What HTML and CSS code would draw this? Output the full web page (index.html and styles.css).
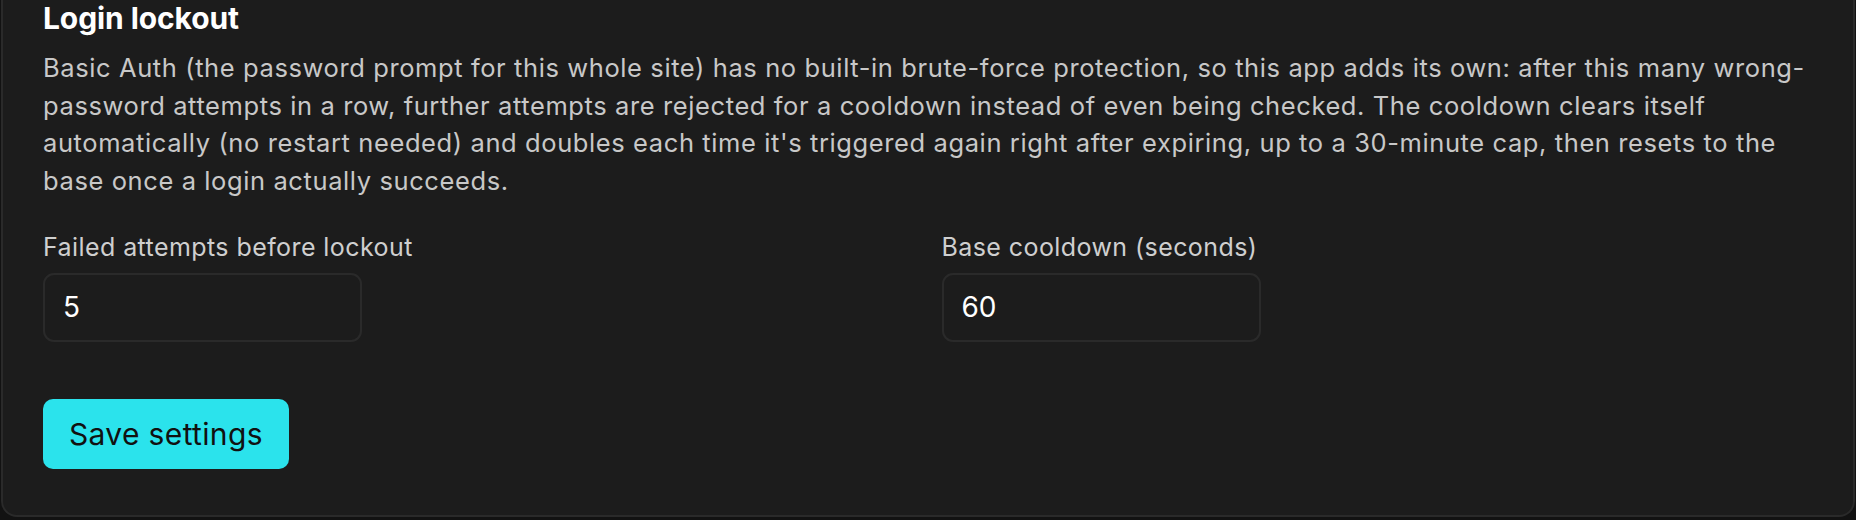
FILE: index.html
```html
<!DOCTYPE html>
<html lang="en">
<head>
<meta charset="utf-8">
<title>Login lockout</title>
<link rel="stylesheet" href="styles.css">
</head>
<body>
<div class="page">
  <section class="panel">
    <h2 class="panel-title">Login lockout</h2>
    <p class="panel-desc">Basic Auth (the password prompt for this whole site) has no built-in brute-force protection, so this app adds its own: after this many wrong-password attempts in a row, further attempts are rejected for a cooldown instead of even being checked. The cooldown clears itself automatically (no restart needed) and doubles each time it's triggered again right after expiring, up to a 30-minute cap, then resets to the base once a login actually succeeds.</p>
    <div class="fields">
      <label class="field">
        <span class="field-label">Failed attempts before lockout</span>
        <input class="field-input" type="text" value="5">
      </label>
      <label class="field">
        <span class="field-label">Base cooldown (seconds)</span>
        <input class="field-input" type="text" value="60">
      </label>
    </div>
    <div class="actions">
      <button class="btn-primary" type="button">Save settings</button>
    </div>
  </section>
</div>
</body>
</html>
```

FILE: styles.css
```css
html, body {
  margin: 0;
  padding: 0;
  background: #121212;
}

body {
  font-family: Inter, "Noto Sans", "Liberation Sans", sans-serif;
  color: #c9c9c9;
  width: 1856px;
  height: 520px;
  overflow: hidden;
}

.page {
  padding: 0 1px 2px 1px;
}

.panel {
  background: #1c1c1c;
  border: 2px solid #2a2a2a;
  border-top: none;
  border-radius: 0 0 16px 16px;
  padding: 0 40px 46px 40px;
}

.panel-title {
  margin: 0;
  font-size: 30px;
  line-height: 36px;
  font-weight: 700;
  color: #ffffff;
  letter-spacing: -0.1px;
}

.panel-desc {
  margin: 13px 0 0 0;
  font-size: 25.5px;
  line-height: 37.5px;
  letter-spacing: 0.6px;
  color: #c8c8c8;
}

.fields {
  display: grid;
  grid-template-columns: 1fr 1fr;
  column-gap: 27px;
  margin-top: 30px;
}

.field {
  display: flex;
  flex-direction: column;
  align-items: flex-start;
  gap: 6px;
}

.field-label {
  font-size: 25px;
  line-height: 37.5px;
  letter-spacing: 0.42px;
  color: #cfcfcf;
}

.field-input {
  box-sizing: border-box;
  width: 319px;
  height: 69px;
  padding: 0 18px;
  background: #1c1c1c;
  border: 2px solid #2a2a2a;
  border-radius: 11px;
  color: #ffffff;
  font-family: Inter, "Noto Sans", "Liberation Sans", sans-serif;
  font-size: 28px;
  outline: none;
}

.actions {
  margin-top: 57px;
}

.btn-primary {
  box-sizing: border-box;
  height: 70px;
  padding: 0 26px;
  background: #2be3ec;
  border: none;
  border-radius: 10px;
  color: #111111;
  font-family: Inter, "Noto Sans", "Liberation Sans", sans-serif;
  font-size: 30px;
  letter-spacing: 0.35px;
  cursor: pointer;
}
```
